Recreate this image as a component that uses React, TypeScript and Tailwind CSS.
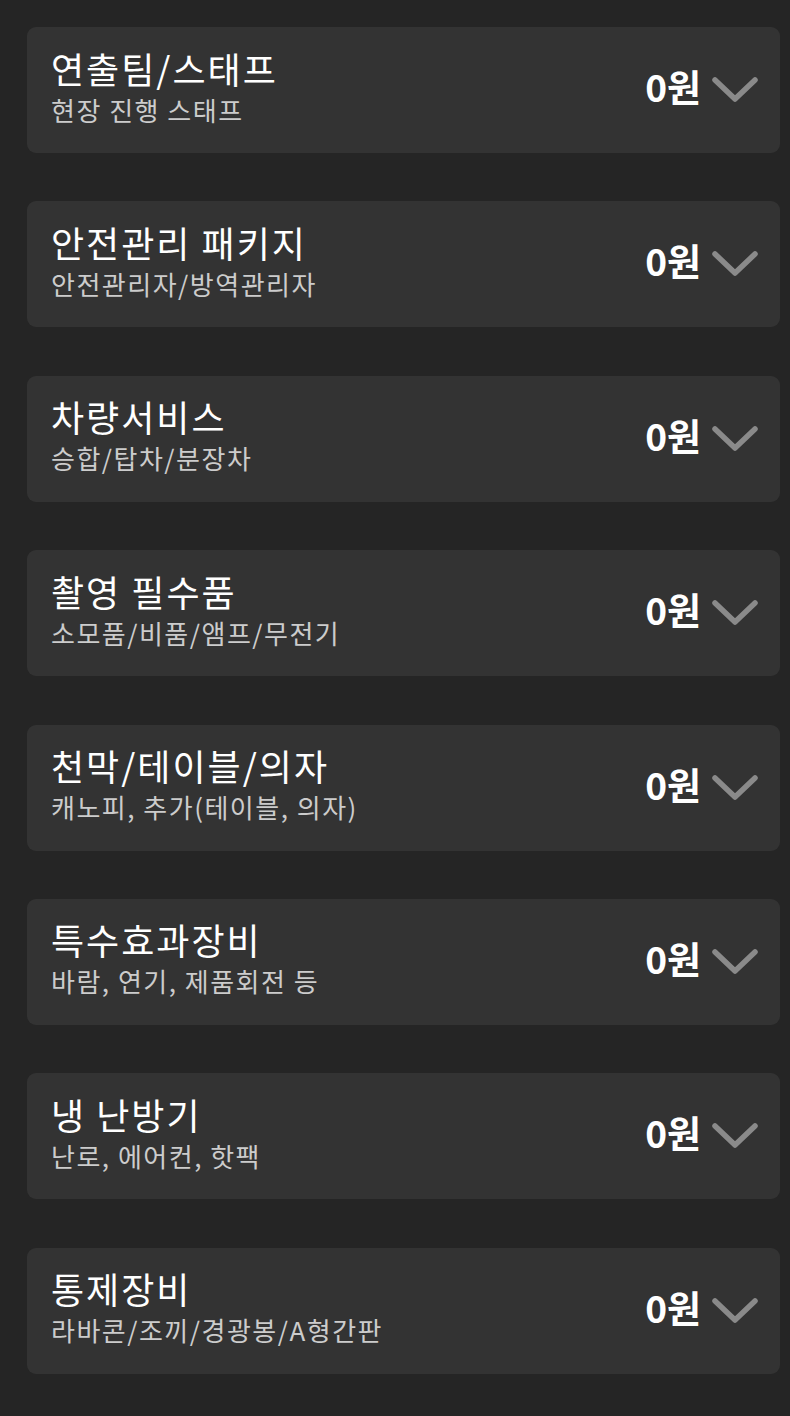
import React from 'react';

const items = [
  { title: '연출팀/스태프', desc: '현장 진행 스태프' },
  { title: '안전관리 패키지', desc: '안전관리자/방역관리자' },
  { title: '차량서비스', desc: '승합/탑차/분장차' },
  { title: '촬영 필수품', desc: '소모품/비품/앰프/무전기' },
  { title: '천막/테이블/의자', desc: '캐노피, 추가(테이블, 의자)' },
  { title: '특수효과장비', desc: '바람, 연기, 제품회전 등' },
  { title: '냉 난방기', desc: '난로, 에어컨, 핫팩' },
  { title: '통제장비', desc: '라바콘/조끼/경광봉/A형간판' },
];

function Chevron() {
  return (
    <svg width="46" height="28" viewBox="0 0 46 28" fill="none" className="shrink-0">
      <path d="M3 4 L23 23 L43 4" stroke="#8a8a8a" strokeWidth="5.5" strokeLinecap="round" strokeLinejoin="round" />
    </svg>
  );
}

export default function App() {
  return (
    <div
      className="min-h-[1416px] w-[790px] bg-[#252525] px-[27px] pt-[27px]"
      style={{ fontFamily: '"Noto Sans CJK KR", "Noto Sans", sans-serif' }}
    >
      <div className="flex flex-col gap-[48.4px]">
        {items.map((it) => (
          <div
            key={it.title}
            className="flex h-[126px] w-[753px] items-center justify-between rounded-[9px] bg-[#333333] pl-[24px] pr-[22px]"
          >
            <div className="mb-[8px] flex flex-col">
              <div className="text-[36px] leading-[46px] tracking-[2px] text-white">{it.title}</div>
              <div className="text-[26px] leading-[37px] tracking-[1.5px] text-[#cccccc]">{it.desc}</div>
            </div>
            <div className="flex items-center gap-[11px]">
              <span className="mb-[7px] text-[37px] font-bold leading-none text-white">0원</span>
              <Chevron />
            </div>
          </div>
        ))}
      </div>
    </div>
  );
}
